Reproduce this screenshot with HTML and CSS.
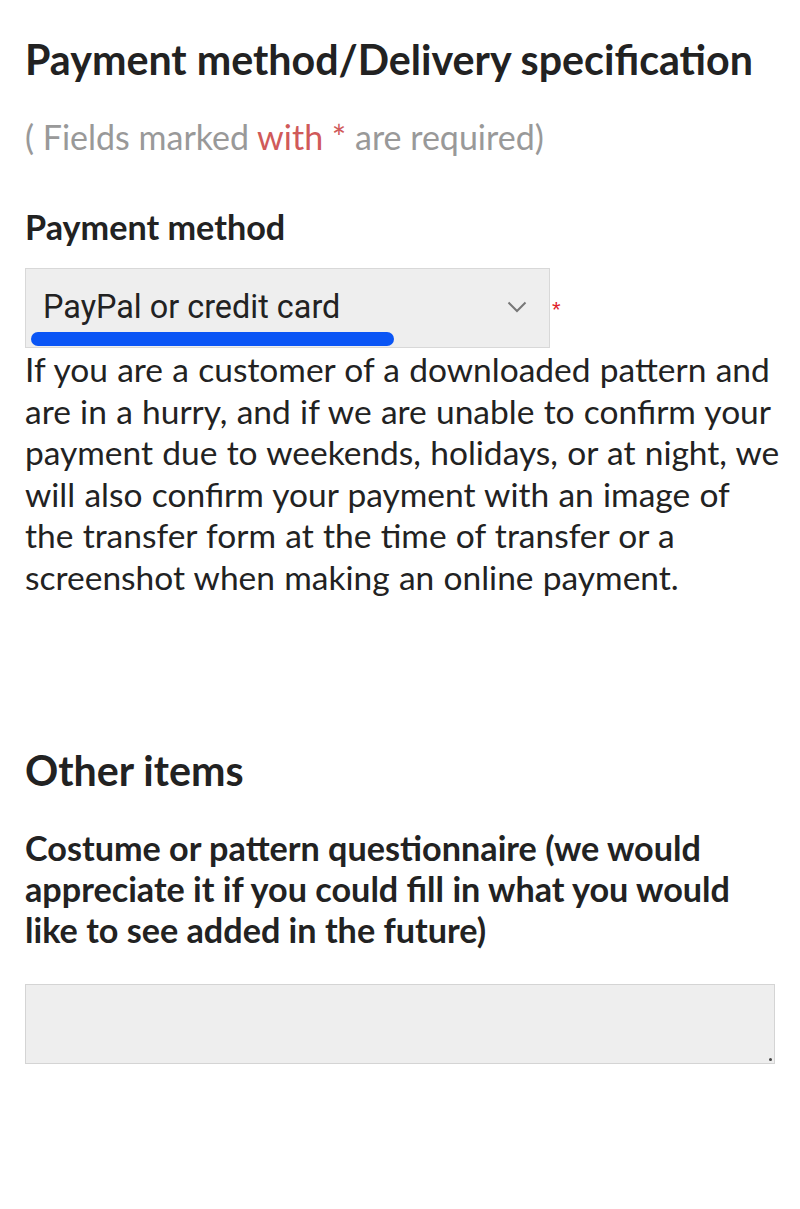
FILE: index.html
```html
<!DOCTYPE html>
<html lang="en">
<head>
<meta charset="utf-8">
<link rel="stylesheet" href="styles.css">
</head>
<body>
<main class="page">
  <h2 class="section-title">Payment method/Delivery specification</h2>
  <p class="required-note">( Fields marked <span class="red">with</span> <span class="star">*</span> are required)</p>

  <h3 class="field-label">Payment method</h3>
  <div class="select-row">
    <div class="select-box">
      <span class="select-text">PayPal or credit card</span>
      <svg class="chevron" width="20" height="12" viewBox="0 0 20 12"><path d="M1.5 1.5 L10 10 L18.5 1.5" fill="none" stroke="#777" stroke-width="2"/></svg>
      <span class="focus-bar"></span>
    </div>
    <span class="req-star">*</span>
  </div>
  <p class="note">If you are a customer of a downloaded pattern and are in a hurry, and if we are unable to confirm your payment due to weekends, holidays, or at night, we will also confirm your payment with an image of the transfer form at the time of transfer or a screenshot when making an online payment.</p>

  <h2 class="section-title other">Other items</h2>
  <h3 class="field-label question">Costume or pattern questionnaire (we would appreciate it if you could fill in what you would like to see added in the future)</h3>
  <div class="textarea"><span class="grip"></span></div>
</main>
</body>
</html>
```

FILE: styles.css
```css
html, body {
  margin: 0;
  padding: 0;
  background: #fff;
}
.page {
  padding: 0 25px;
  font-family: Lato, "Liberation Sans", sans-serif;
  color: #222;
}
.section-title {
  font-size: 41.2px;
  font-weight: 700;
  margin: 0;
  padding-top: 35px;
  line-height: 48px;
}
.required-note {
  font-size: 34px;
  color: #999;
  margin: 34px 0 0;
  line-height: 40px;
}
.red { color: #d05a5a; }
.star { color: #d05a5a; }
.field-label {
  font-size: 34.2px;
  font-weight: 700;
  margin: 49px 0 0;
  line-height: 41px;
}
.select-row {
  display: flex;
  align-items: flex-start;
  margin-top: 21px;
}
.select-box {
  position: relative;
  width: 525px;
  height: 80px;
  box-sizing: border-box;
  background: #eee;
  border: 1px solid #d8d8d8;
  display: flex;
  align-items: center;
  padding: 0 22px 0 17px;
}
.select-text {
  font-family: Roboto, sans-serif;
  font-size: 32.4px;
  color: #222;
  flex: 1;
  margin-top: -3px;
}
.chevron {
  margin-top: -2px;
}
.focus-bar {
  position: absolute;
  left: 5px;
  width: 363px;
  bottom: 1px;
  height: 14px;
  border-radius: 7px;
  background: #0a55f5;
}
.req-star {
  color: #e0202a;
  font-size: 22px;
  margin: 29px 0 0 2px;
  font-family: "Liberation Sans", sans-serif;
}
.note {
  font-size: 33.5px;
  word-spacing: 0.7px;
  line-height: 41.5px;
  margin: 1px -6px 0 0;
}
.section-title.other {
  padding-top: 0;
  margin-top: 148px;
}
.question {
  margin-top: 33px;
}
.textarea {
  position: relative;
  margin-top: 34px;
  height: 80px;
  box-sizing: border-box;
  background: #eee;
  border: 1px solid #d4d4d4;
}
.grip {
  position: absolute;
  right: 2px;
  bottom: 2px;
  width: 3px;
  height: 3px;
  border-radius: 50%;
  background: #444;
}
```
